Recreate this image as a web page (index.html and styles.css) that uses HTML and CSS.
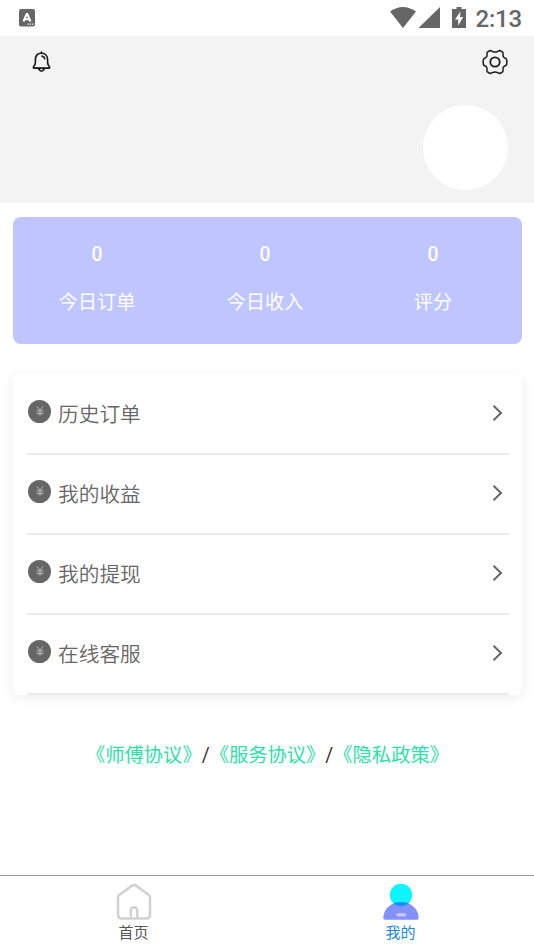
FILE: index.html
```html
<!DOCTYPE html>
<html lang="zh-CN">
<head>
<meta charset="utf-8">
<meta name="viewport" content="width=device-width, initial-scale=1">
<title>我的</title>
<link rel="stylesheet" href="styles.css">
</head>
<body>
<div class="statusbar">
  <svg class="status-app" width="16" height="18" viewBox="0 0 16 18">
    <rect width="16" height="17.5" rx="2" fill="#666"/>
    <path d="M4.500 12.500 7.700 5h.6l3.200 7.500M6 10.200h4" fill="none" stroke="#fff" stroke-width="2"/>
    <path d="M8.500 15.200h1.300m1 0h1.300m1 0h1.300" stroke="#fff" stroke-width="1.200"/>
  </svg>
  <div class="status-right">
    <svg width="86" height="24" viewBox="0 0 86 24" class="status-icons">
      <path d="M0 5.500Q13-3.500 26 5.500L13 22Z" fill="#666"/>
      <path d="M50 1v21H28.500Z" fill="#666"/>
      <path d="M66.500 1h5v2h4.500v19H62V3h4.500Z" fill="#666"/>
      <path d="M70.500 5.500 65 13.500h3.200v6l5-8.500H70Z" fill="#fff"/>
    </svg>
    <span class="clock">2:13</span>
  </div>
</div>

<header class="profile">
  <div class="tools">
    <svg class="bell" width="20" height="22" viewBox="0 0 20 22" fill="none" stroke="#141414" stroke-width="1.600" stroke-linecap="round" stroke-linejoin="round">
      <path d="M9.500 2.300C5.300 2.300 3.400 5.100 3.400 8.800v2.700c0 2-.8 3-1.800 4.200-.5.700-.3 1.400.6 1.400h14.600c.9 0 1.100-.7.600-1.400-1-1.200-1.800-2.200-1.800-4.200V8.800c0-3.700-1.900-6.500-6.100-6.500Z"/>
      <path d="M9.500 1v1M6.800 17.500c.5 3.300 4.900 3.300 5.400 0M10 5.100c1.600.2 2.400 1.100 2.700 2.600"/>
    </svg>
    <svg class="gear" width="26" height="26" viewBox="0 0 26 26" fill="none" stroke="#1b1b1b" stroke-width="1.500" stroke-linejoin="round">
      <path d="M8.100 1.500C9.300 1.100 10.300 3.100 13 3.100S16.700 1.100 17.900 1.500L20.600 3.100C21.800 4.100 20.300 5.600 21.300 7.700 22.400 9.600 24.300 9 24.600 10.500Q25.200 13 24.600 15.500C24.300 17 22.400 16.400 21.300 18.300 20.300 20.400 21.800 21.900 20.600 22.900L17.900 24.500C16.700 24.900 15.700 22.900 13 22.900S9.300 24.900 8.100 24.500L5.400 22.900C4.200 21.900 5.700 20.400 4.700 18.300 3.600 16.400 1.700 17 1.400 15.500Q.8 13 1.400 10.500C1.700 9 3.600 9.600 4.700 7.700 5.700 5.600 4.200 4.100 5.400 3.100Z"/>
      <circle cx="13" cy="13" r="4.700" stroke-width="1.800"/>
    </svg>
  </div>
  <div class="avatar"></div>
</header>

<main>
  <section class="stats">
    <div class="stat"><b>0</b><span>今日订单</span></div>
    <div class="stat"><b>0</b><span>今日收入</span></div>
    <div class="stat"><b>0</b><span>评分</span></div>
  </section>

  <nav class="menu">
    <a class="row"><i class="coin"><svg width="24" height="24" viewBox="0 0 24 24"><path d="M9 7.500 12 11.500 15 7.500M8.500 12h7M8.500 14.500h7M12 11.500V17"/></svg></i><span>历史订单</span><svg class="chevron" width="12" height="18" viewBox="0 0 12 18"><path d="M2.500 1.700 10 9 2.500 16.300"/></svg></a>
    <a class="row"><i class="coin"><svg width="24" height="24" viewBox="0 0 24 24"><path d="M9 7.500 12 11.500 15 7.500M8.500 12h7M8.500 14.500h7M12 11.500V17"/></svg></i><span>我的收益</span><svg class="chevron" width="12" height="18" viewBox="0 0 12 18"><path d="M2.500 1.700 10 9 2.500 16.300"/></svg></a>
    <a class="row"><i class="coin"><svg width="24" height="24" viewBox="0 0 24 24"><path d="M9 7.500 12 11.500 15 7.500M8.500 12h7M8.500 14.500h7M12 11.500V17"/></svg></i><span>我的提现</span><svg class="chevron" width="12" height="18" viewBox="0 0 12 18"><path d="M2.500 1.700 10 9 2.500 16.300"/></svg></a>
    <a class="row"><i class="coin"><svg width="24" height="24" viewBox="0 0 24 24"><path d="M9 7.500 12 11.500 15 7.500M8.500 12h7M8.500 14.500h7M12 11.500V17"/></svg></i><span>在线客服</span><svg class="chevron" width="12" height="18" viewBox="0 0 12 18"><path d="M2.500 1.700 10 9 2.500 16.300"/></svg></a>
  </nav>

  <p class="legal"><a>《师傅协议》</a>/<a>《服务协议》</a>/<a>《隐私政策》</a></p>
</main>

<footer class="tabs">
  <a class="tab">
    <svg width="36" height="38" viewBox="0 0 36 38" fill="none" stroke="#d2d2d2" stroke-width="2.600" stroke-linejoin="round">
      <path d="M2 14.500Q2 13 3.200 12L16 2.600Q18 1.200 20 2.600L32.800 12Q34 13 34 14.500V32Q34 35.500 30.500 35.500H5.500Q2 35.500 2 32Z"/>
      <path d="M14.800 35V27.500a3.200 3.200 0 0 1 6.400 0V35"/>
    </svg>
    <span>首页</span>
  </a>
  <a class="tab active">
    <svg width="36" height="38" viewBox="0 0 36 38">
      <defs><clipPath id="head"><circle cx="18" cy="12" r="11.200"/></clipPath></defs>
      <circle cx="18" cy="12" r="11.200" fill="#0ff5ff"/>
      <path d="M.3 35C.3 26 8 19 18 19s17.700 7 17.700 16q0 1.800-1.800 1.800H2.100Q.3 36.800.3 35Z" fill="#8392f8"/>
      <path d="M.3 35C.3 26 8 19 18 19s17.700 7 17.700 16Z" fill="#1594f5" clip-path="url(#head)"/>
      <rect x="13.300" y="30.200" width="9.800" height="3.400" rx="1.700" fill="#c5cbff"/>
    </svg>
    <span>我的</span>
  </a>
</footer>
</body>
</html>
```

FILE: styles.css
```css
* { box-sizing: border-box; }

body {
  margin: 0;
  height: 950px;
  display: flex;
  flex-direction: column;
  background: #fff;
  color: #333;
  font-family: Roboto, "Noto Sans CJK SC", sans-serif;
  overflow: hidden;
}

svg { display: block; flex: none; }

.statusbar {
  height: 36px;
  display: flex;
  justify-content: space-between;
  padding: 0 12px 0 19px;
}
.status-app { margin-top: 9px; }
.status-right { display: flex; }
.status-icons { margin-top: 6px; }
.clock {
  font-size: 24px;
  font-weight: 500;
  line-height: 38px;
  letter-spacing: -.2px;
  color: #666;
}

.profile {
  height: 167px;
  background: #f3f3f3;
  padding: 13px 26px 0 31.500px;
}
.tools { display: flex; justify-content: space-between; height: 56px; }
.bell { margin-top: 2px; }
.avatar {
  width: 85px;
  height: 85px;
  margin-left: auto;
  border-radius: 50%;
  background: #fff;
}

main { flex: 1; padding: 14px 12px 0 13px; }

.stats {
  display: flex;
  height: 127px;
  padding: 23px 5px 0 0;
  border-radius: 8px;
  background: #bec5ff;
  color: #fff;
}
.stat {
  flex: 1;
  display: flex;
  flex-direction: column;
  align-items: center;
  gap: 18px;
  font-size: 19.300px;
  line-height: 30px;
}
.stat b { font-weight: 500; }

.menu {
  margin-top: 30px;
  height: 321px;
  padding: 1px 13px 0 14px;
  border-radius: 6px;
  background: #fff;
  box-shadow: 0 3px 14px rgba(0, 0, 0, .07);
}
.row {
  display: flex;
  align-items: center;
  height: 80px;
  padding: 0 6px 3px 1px;
  border-bottom: 2px solid #ebebeb;
  color: #666;
  font-size: 20.700px;
}
.coin {
  width: 23px;
  height: 23px;
  margin: 0 7px 3px 0;
  display: flex;
  align-items: center;
  justify-content: center;
  border-radius: 50%;
  background: #666;
}
.coin path { fill: none; stroke: #c8c8c8; stroke-width: .9; }
.row span { flex: 1; font-weight: 350; }
.chevron path { fill: none; stroke: #666; stroke-width: 2; }

.legal {
  margin: 46px 0 0;
  text-align: center;
  font-size: 19.300px;
  line-height: 30px;
}
.legal a { color: #2ae2a5; }

.tabs {
  height: 75px;
  display: flex;
  border-top: 1px solid #999;
}
.tab {
  flex: 1;
  display: flex;
  flex-direction: column;
  align-items: center;
  padding-top: 7px;
  font-size: 15px;
  line-height: 22px;
  color: #555;
}
.tab span { margin-top: 1px; }
.tab.active { color: #1688e0; }
```
